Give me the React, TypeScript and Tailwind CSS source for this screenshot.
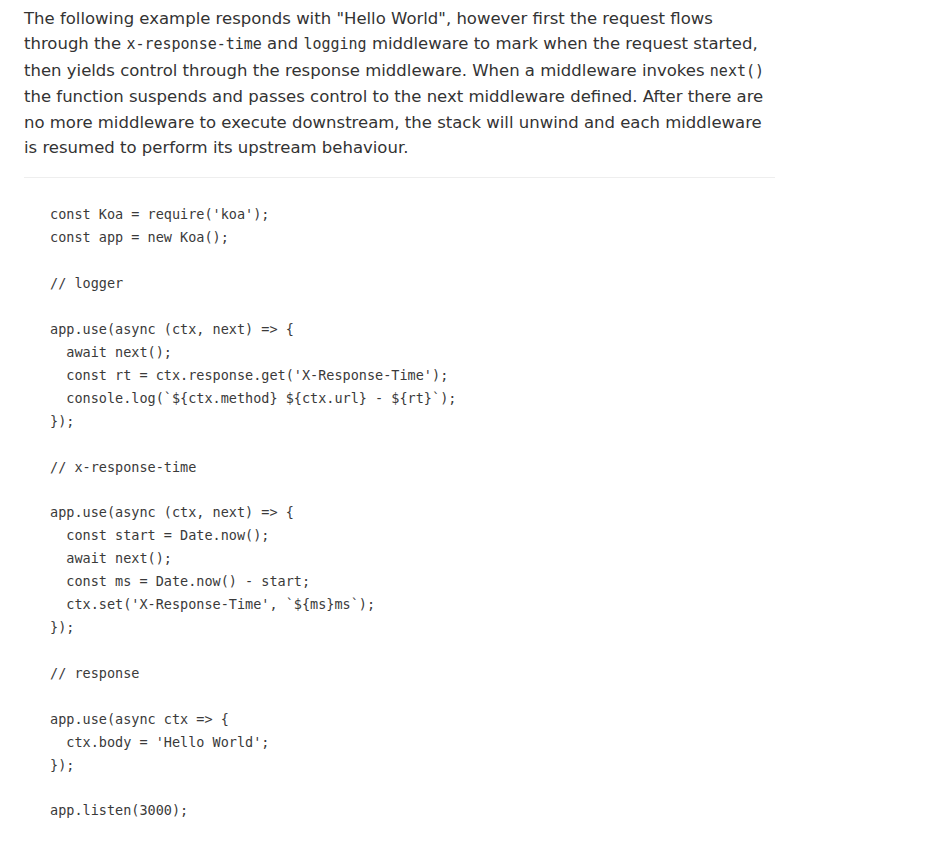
const code = `const Koa = require('koa');
const app = new Koa();

// logger

app.use(async (ctx, next) => {
  await next();
  const rt = ctx.response.get('X-Response-Time');
  console.log(\`\${ctx.method} \${ctx.url} - \${rt}\`);
});

// x-response-time

app.use(async (ctx, next) => {
  const start = Date.now();
  await next();
  const ms = Date.now() - start;
  ctx.set('X-Response-Time', \`\${ms}ms\`);
});

// response

app.use(async ctx => {
  ctx.body = 'Hello World';
});

app.listen(3000);`;

function InlineCode({ children }: { children: string }) {
  return <code className="font-['DejaVu_Sans_Mono',monospace] text-[15px]">{children}</code>;
}

export default function App() {
  return (
    <div className="min-h-screen bg-white">
      <div className="w-[751px] ml-6 pt-[6px] font-['DejaVu_Sans',sans-serif] text-[#333]">
        <p className="text-[16.5px] leading-[25.4px]">
          The following example responds with "Hello World", however first the request flows
          through the <InlineCode>x-response-time</InlineCode> and <InlineCode>logging</InlineCode>{' '}
          middleware to mark when the request started, then yields control through the response
          middleware. When a middleware invokes <InlineCode>next()</InlineCode> the function suspends
          and passes control to the next middleware defined. After there are no more middleware to
          execute downstream, the stack will unwind and each middleware is resumed to perform its
          upstream behaviour.
        </p>
        <hr className="mt-[17px] border-0 border-t border-[#eeeeee]" />
        <pre className="mt-[25px] pl-[26px] font-['DejaVu_Sans_Mono',monospace] text-[13.5px] leading-[22.92px] text-[#3a3a3a]">
          {code}
        </pre>
      </div>
    </div>
  );
}
